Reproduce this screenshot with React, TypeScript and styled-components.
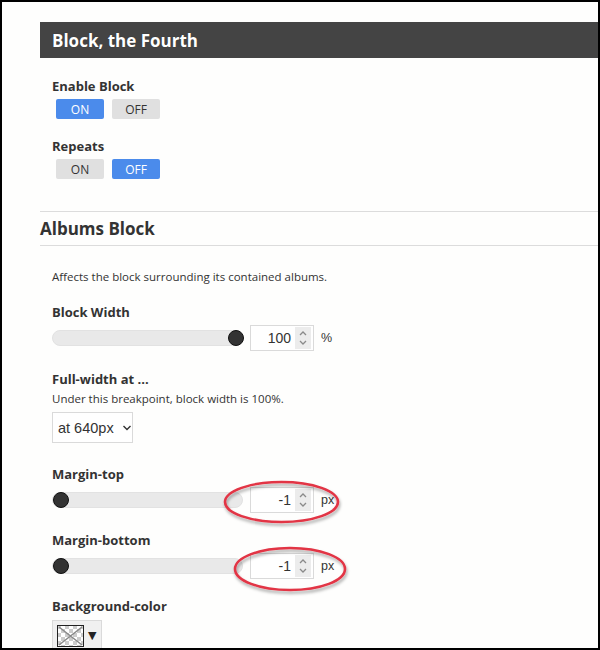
import React from "react";
import styled, { createGlobalStyle } from "styled-components";

const Global = createGlobalStyle`
  html, body { margin: 0; padding: 0; background: #fff; }
  * { box-sizing: border-box; }
`;

const Frame = styled.div`
  width: 600px;
  height: 650px;
  border: 2px solid #000;
  background: #fefefd;
  overflow: hidden;
  padding: 20px 0 0 38px;
  font-family: "Open Sans", "Noto Sans", sans-serif;
  color: #333;
`;

const Header = styled.div`
  height: 36px;
  background: #444;
  color: #fff;
  font-weight: 700;
  font-size: 17px;
  display: flex;
  align-items: center;
  padding-left: 12px;
  text-shadow: 0 0 1px rgba(0,0,0,0.4);
`;

const Section = styled.div`
  padding-left: 12px;
`;

const Label = styled.div<{ $top: number }>`
  margin-top: ${(p) => p.$top}px;
  font-weight: 700;
  font-size: 13px;
  line-height: 18px;
  color: #333;
`;

const ToggleRow = styled.div`
  display: flex;
  gap: 8px;
  margin-top: 4px;
  padding-left: 4px;
`;

const Toggle = styled.div<{ $on: boolean }>`
  width: 48px;
  height: 20px;
  border-radius: 2px;
  display: flex;
  align-items: center;
  justify-content: center;
  font-size: 12px;
  background: ${(p) => (p.$on ? "#4b8beb" : "#e0e0e0")};
  color: ${(p) => (p.$on ? "#fff" : "#333")};
`;

const Divider = styled.div<{ $top: number }>`
  height: 1px;
  background: #dcdcdc;
  margin-top: ${(p) => p.$top}px;
`;

const SubHeading = styled.div`
  font-weight: 700;
  font-size: 17px;
  line-height: 32px;
  padding-top: 1px;
  color: #333;
`;

const Note = styled.div<{ $top: number }>`
  margin-top: ${(p) => p.$top}px;
  font-size: 11.5px;
  line-height: 16px;
  color: #333;
`;

const SliderRow = styled.div`
  display: flex;
  align-items: center;
  margin-top: 4px;
  position: relative;
`;

const Track = styled.div`
  width: 191px;
  height: 16px;
  border: 1px solid #e2e2e2;
  background: #e9e9e9;
  border-radius: 8px;
  position: relative;
`;

const Thumb = styled.div`
  position: absolute;
  top: -1px;
  width: 16px;
  height: 16px;
  border-radius: 50%;
  background: #333;
  border: 1px solid #111;
`;

const NumBox = styled.div`
  margin-left: 7px;
  width: 64px;
  height: 26px;
  border: 1px solid #dadada;
  background: #fff;
  display: flex;
  align-items: center;
  justify-content: flex-end;
  padding-right: 2px;
  font-family: "Liberation Sans", Arial, sans-serif;
  font-size: 14px;
  color: #333;
`;

const NumValue = styled.span`
  margin-right: 4px;
`;

const Spinner = styled.div`
  width: 16px;
  height: 22px;
  background: #ececec;
  display: flex;
  align-items: center;
  justify-content: center;
`;

const Unit = styled.span`
  margin-left: 7px;
  font-family: "Liberation Sans", Arial, sans-serif;
  font-size: 12.5px;
  color: #333;
`;

const Select = styled.div`
  margin-top: 5px;
  width: 81px;
  height: 31px;
  border: 1px solid #dadada;
  background: #fff;
  display: flex;
  align-items: center;
  padding-left: 5px;
  gap: 8px;
  white-space: nowrap;
  font-family: "Liberation Sans", Arial, sans-serif;
  font-size: 14.5px;
  color: #333;
  svg { flex-shrink: 0; }
`;

const ColorButton = styled.div`
  margin-top: 5px;
  width: 50px;
  height: 34px;
  border: 1px solid #dadada;
  background: #f0f0f0;
  display: flex;
  align-items: flex-start;
  padding: 4px 0 0 4px;
  gap: 4px;
`;

const Arrow = styled.span`
  font-family: "DejaVu Sans", sans-serif;
  font-size: 11px;
  line-height: 22px;
  color: #222;
`;

const Ellipse = styled.svg`
  position: absolute;
  pointer-events: none;
  overflow: visible;
`;

const SpinIcon = () => (
  <svg width="10" height="18" viewBox="0 0 10 18">
    <path d="M2 6 L5 3 L8 6" fill="none" stroke="#8a8a8a" strokeWidth="1.3" />
    <path d="M2 12 L5 15 L8 12" fill="none" stroke="#8a8a8a" strokeWidth="1.3" />
  </svg>
);

const Chevron = () => (
  <svg width="10" height="8" viewBox="0 0 10 8">
    <path d="M1.5 2 L5 5.5 L8.5 2" fill="none" stroke="#333" strokeWidth="1.4" />
  </svg>
);

const Swatch = () => (
  <svg width="27" height="22" viewBox="0 0 27 22">
    <defs>
      <pattern id="chk" width="8" height="8" patternUnits="userSpaceOnUse">
        <rect width="8" height="8" fill="#fff" />
        <rect width="4" height="4" fill="#ccc" />
        <rect x="4" y="4" width="4" height="4" fill="#ccc" />
      </pattern>
    </defs>
    <rect x="0.5" y="0.5" width="26" height="21" fill="url(#chk)" stroke="#222" />
    <path d="M2 2 L25 20 M25 2 L2 20" stroke="#888" strokeWidth="1.5" />
  </svg>
);

type SliderProps = { pos: number; value: string; unit: string; ring?: { left: number; top: number; w: number; h: number } };

const SliderField = ({ pos, value, unit, ring }: SliderProps) => (
  <SliderRow>
    <Track>
      <Thumb style={{ left: pos }} />
    </Track>
    <NumBox>
      <NumValue>{value}</NumValue>
      <Spinner>
        <SpinIcon />
      </Spinner>
    </NumBox>
    <Unit>{unit}</Unit>
    {ring && (
      <Ellipse
        width={ring.w}
        height={ring.h}
        style={{ left: ring.left, top: ring.top }}
      >
        <defs>
          <filter id={`sh${ring.left}`} x="-20%" y="-40%" width="140%" height="180%">
            <feDropShadow dx="1" dy="2.5" stdDeviation="1.5" floodColor="#000" floodOpacity="0.35" />
          </filter>
        </defs>
        <ellipse
          cx={ring.w / 2}
          cy={ring.h / 2}
          rx={ring.w / 2 - 2}
          ry={ring.h / 2 - 2}
          fill="none"
          stroke="#e23445"
          strokeWidth="2.6"
          filter={`url(#sh${ring.left})`}
        />
      </Ellipse>
    )}
  </SliderRow>
);

export default function App() {
  return (
    <>
      <Global />
      <Frame>
        <Header>Block, the Fourth</Header>
        <Section>
          <Label $top={19}>Enable Block</Label>
          <ToggleRow>
            <Toggle $on>ON</Toggle>
            <Toggle $on={false}>OFF</Toggle>
          </ToggleRow>
          <Label $top={18}>Repeats</Label>
          <ToggleRow>
            <Toggle $on={false}>ON</Toggle>
            <Toggle $on>OFF</Toggle>
          </ToggleRow>
        </Section>
        <Divider $top={32} />
        <SubHeading>Albums Block</SubHeading>
        <Divider $top={0} />
        <Section>
          <Note $top={23}>Affects the block surrounding its contained albums.</Note>
          <Label $top={18}>Block Width</Label>
          <SliderField pos={175} value="100" unit="%" />
          <Label $top={19}>Full-width at ...</Label>
          <Note $top={3}>Under this breakpoint, block width is 100%.</Note>
          <Select>
            at 640px
            <Chevron />
          </Select>
          <Label $top={22}>Margin-top</Label>
          <SliderField pos={0} value="-1" unit="px" ring={{ left: 171, top: -7, w: 117, h: 44 }} />
          <Label $top={18}>Margin-bottom</Label>
          <SliderField pos={0} value="-1" unit="px" ring={{ left: 181, top: -7, w: 114, h: 46 }} />
          <Label $top={18}>Background-color</Label>
          <ColorButton>
            <Swatch />
            <Arrow>▼</Arrow>
          </ColorButton>
        </Section>
      </Frame>
    </>
  );
}
